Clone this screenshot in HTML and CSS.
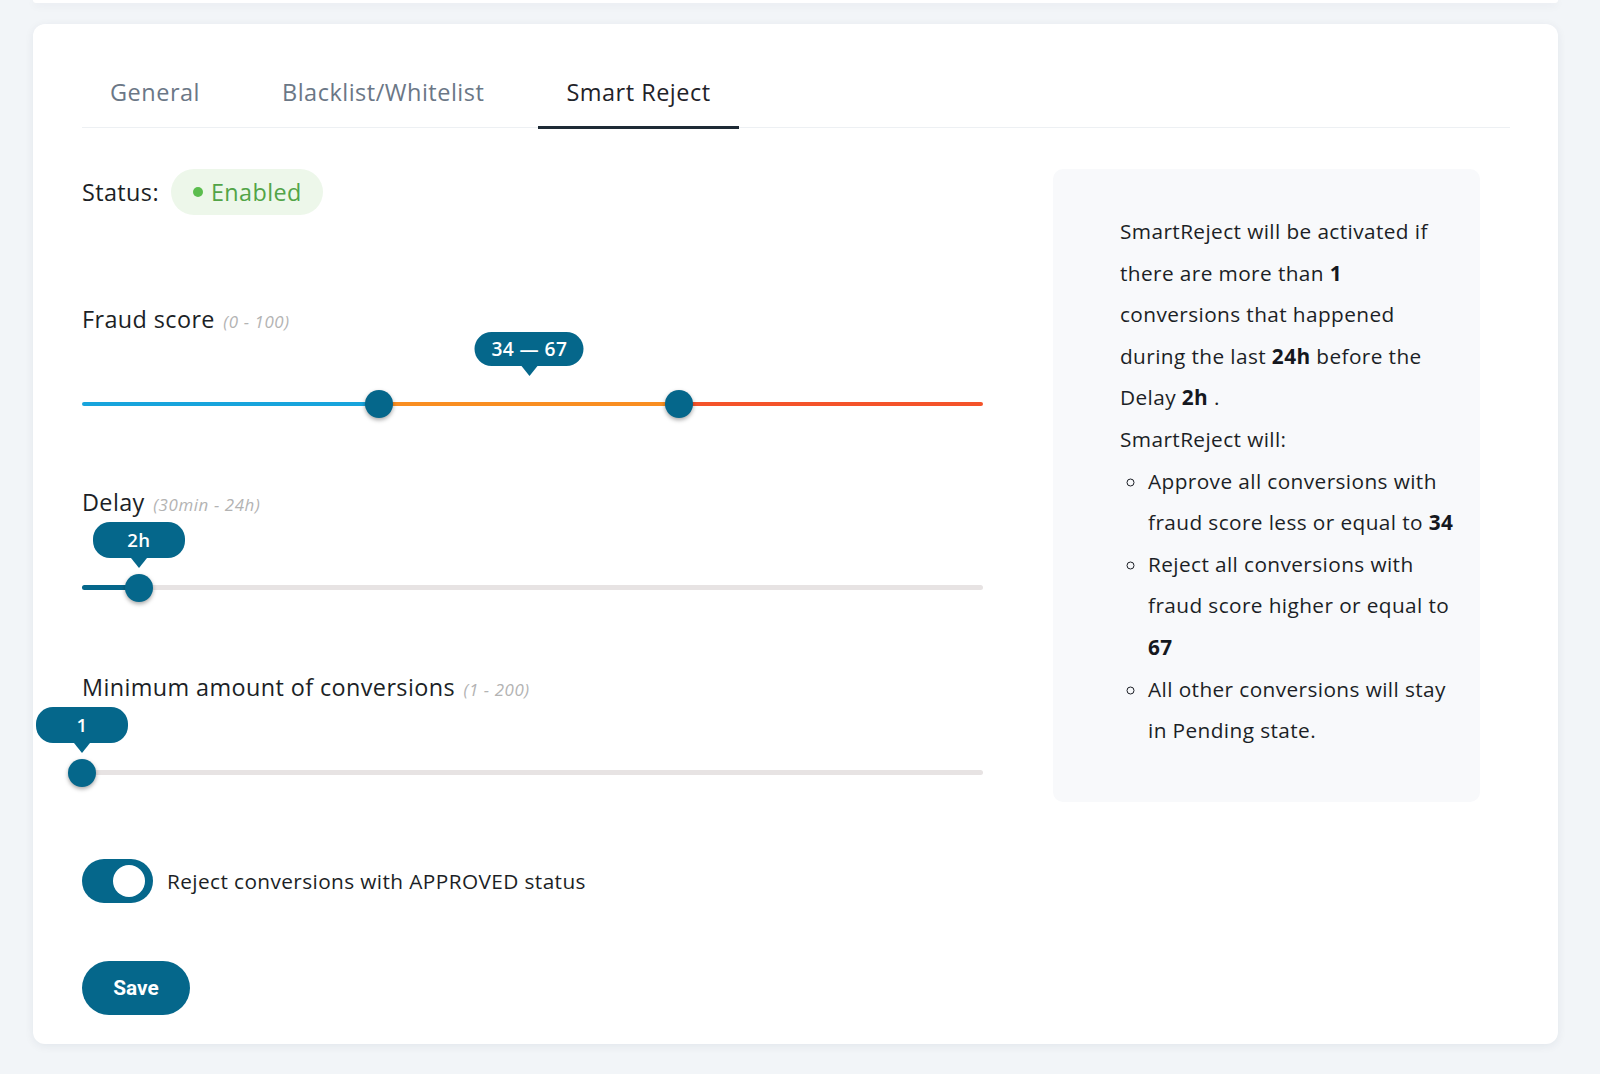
FILE: index.html
```html
<!DOCTYPE html>
<html lang="en">
<head>
    <meta charset="UTF-8">
    <meta name="viewport" content="width=device-width, initial-scale=1.0">
    <title>Smart Reject settings</title>
    <link rel="stylesheet" href="styles.css">
</head>
<body>
    <div class="page">
        <div class="top-card"></div>

        <div class="card">
            <!-- tabs -->
            <nav class="tabs">
                <a href="#" class="tab">General</a>
                <a href="#" class="tab">Blacklist/Whitelist</a>
                <a href="#" class="tab active">Smart Reject</a>
            </nav>

            <div class="content">
                <div class="settings">
                    <div class="status-row">
                        <span class="status-label">Status:</span>
                        <span class="badge"><span class="dot"></span>Enabled</span>
                    </div>

                    <!-- fraud score -->
                    <div class="field first">
                        <div class="field-label">Fraud score <span class="hint">(0 - 100)</span></div>
                        <div class="slider">
                            <div class="track track-score">
                                <span class="tip tip-range" style="left: 49.65%">34 — 67</span>
                                <span class="handle" style="left: 33%"></span>
                                <span class="handle" style="left: 66.3%"></span>
                            </div>
                        </div>
                    </div>

                    <!-- delay -->
                    <div class="field">
                        <div class="field-label">Delay <span class="hint">(30min - 24h)</span></div>
                        <div class="slider">
                            <div class="track">
                                <span class="fill" style="width: 6.3%"></span>
                                <span class="tip" style="left: 6.3%">2h</span>
                                <span class="handle" style="left: 6.3%"></span>
                            </div>
                        </div>
                    </div>

                    <!-- minimum conversions -->
                    <div class="field">
                        <div class="field-label">Minimum amount of conversions <span class="hint">(1 - 200)</span></div>
                        <div class="slider">
                            <div class="track">
                                <span class="tip" style="left: 0%">1</span>
                                <span class="handle" style="left: 0%"></span>
                            </div>
                        </div>
                    </div>

                    <label class="switch-row">
                        <span class="switch"></span>
                        Reject conversions with APPROVED status
                    </label>

                    <button class="btn-save">Save</button>
                </div>

                <aside class="info">
                    <p>SmartReject will be activated if there are more than <b>1</b> conversions that happened during the last <b>24h</b> before the Delay <b>2h</b> .</p>
                    <p>SmartReject will:</p>
                    <ul>
                        <li>Approve all conversions with fraud score less or equal to <b>34</b></li>
                        <li>Reject all conversions with fraud score higher or equal to <b>67</b></li>
                        <li>All other conversions will stay in Pending state.</li>
                    </ul>
                </aside>
            </div>
        </div>
    </div>
</body>
</html>
```

FILE: styles.css
```css
body {
    margin: 0;
    background: #f2f5f8;
    font-family: 'Open Sans', 'Noto Sans', sans-serif;
    font-size: 20.8px;
    letter-spacing: 0.4px;
    color: #1c1f26;
}
.page {
    padding: 0 42px 31px 33px;
}
.top-card {
    height: 3px;
    background: white;
    border-radius: 0 0 12px 12px;
    box-shadow: 0 2px 8px rgba(20, 40, 70, 0.08);
}
.card {
    margin-top: 21px;
    background: white;
    border-radius: 12px;
    box-shadow: 0 2px 10px rgba(20, 40, 70, 0.07);
    padding: 38px 48px 29px 49px;
}

/* tabs */
.tabs {
    display: flex;
    gap: 26px;
    border-bottom: 1px solid #edf0f3;
}
.tab {
    padding: 17px 28px 21px;
    line-height: 26px;
    font-size: 23.5px;
    letter-spacing: 0.5px;
    color: #6b7786;
    text-decoration: none;
    border-bottom: 3px solid transparent;
    margin-bottom: -2px;
}
.tab.active {
    color: #1f2329;
    border-bottom-color: #1e2a35;
}

.content {
    display: grid;
    grid-template-columns: 901px 427px;
    column-gap: 70px;
    align-items: start;
    margin-top: 41px;
}

/* status */
.status-row {
    display: flex;
    align-items: center;
    gap: 12px;
    height: 46px;
    font-size: 23.4px;
}
.badge {
    display: inline-flex;
    align-items: center;
    gap: 8px;
    height: 46px;
    padding: 0 21px 0 22px;
    border-radius: 23px;
    background: #edf7ea;
    color: #52a447;
}
.dot {
    width: 10px;
    height: 10px;
    border-radius: 50%;
    background: #5bbd4e;
}

/* sliders */
.field {
    margin-bottom: 31px;
}
.field.first {
    margin-top: 91px;
}
.field-label {
    line-height: 26px;
    font-size: 23.4px;
}
.hint {
    font-style: italic;
    font-size: 16.9px;
    letter-spacing: 0.6px;
    color: #b3b3b3;
    margin-left: 2px;
}
.slider {
    height: 125px;
    box-sizing: border-box;
    padding-top: 67px;
}
.field.first .slider {
    height: 123px;
    padding-top: 66px;
}
.track {
    position: relative;
    height: 5px;
    border-radius: 3px;
    background: #e7e3e3;
}
.track-score {
    height: 4px;
    margin-top: 1px;
    background: linear-gradient(to right, #17a4dc 0, #17a4dc 33%, #f98e21 33%, #f98e21 66.3%, #f4532a 66.3%);
}
.fill {
    position: absolute;
    left: 0;
    top: 0;
    bottom: 0;
    border-radius: 3px;
    background: #05678b;
}
.handle {
    position: absolute;
    top: 50%;
    width: 28px;
    height: 28px;
    border-radius: 50%;
    background: #05678b;
    transform: translate(-50%, -50%);
    box-shadow: 0 2px 4px rgba(0, 0, 0, 0.35);
}
.tip {
    position: absolute;
    bottom: 32px;
    transform: translateX(-50%);
    box-sizing: border-box;
    min-width: 92px;
    height: 36px;
    padding: 0 14px;
    border-radius: 17px;
    background: #05678b;
    color: white;
    font-size: 18.6px;
    font-weight: 600;
    line-height: 36px;
    text-align: center;
    white-space: nowrap;
}
.tip::after {
    content: "";
    position: absolute;
    top: 100%;
    left: 50%;
    margin-left: -8px;
    border-left: 8px solid transparent;
    border-right: 8px solid transparent;
    border-top: 10px solid #05678b;
}
.tip-range {
    bottom: 40px;
    height: 34px;
    line-height: 34px;
    min-width: 109px;
    font-size: 19.2px;
}

/* switch */
.switch-row {
    display: flex;
    align-items: center;
    gap: 14px;
    margin-top: 2px;
}
.switch {
    position: relative;
    width: 71px;
    height: 44px;
    border-radius: 22px;
    background: #05678b;
}
.switch::after {
    content: "";
    position: absolute;
    right: 8px;
    top: 6px;
    width: 32px;
    height: 32px;
    border-radius: 50%;
    background: white;
}

.btn-save {
    display: block;
    margin-top: 58px;
    width: 108px;
    height: 54px;
    border: none;
    border-radius: 27px;
    background: #05678b;
    color: white;
    font-family: Roboto, 'Liberation Sans', sans-serif;
    font-size: 20.8px;
    font-weight: 700;
    letter-spacing: 0;
    cursor: pointer;
}

/* info panel */
.info {
    background: #f8f9fb;
    border-radius: 10px;
    padding: 42px 18px 50px 67px;
    line-height: 41.6px;
}
.info p {
    margin: 0;
}
.info ul {
    margin: 0;
    padding-left: 28px;
    list-style: circle;
}
.info b {
    font-weight: 700;
    color: #15181e;
}
```
